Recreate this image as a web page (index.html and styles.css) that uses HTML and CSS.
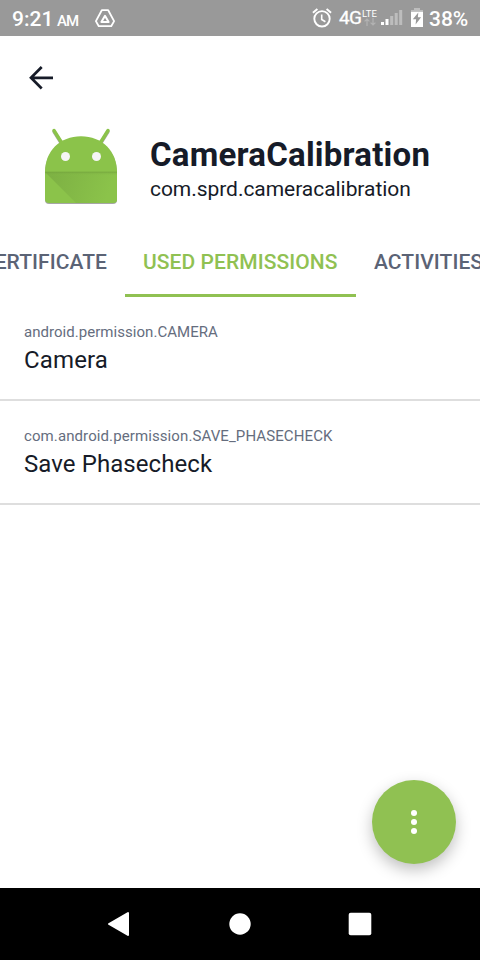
FILE: index.html
```html
<!DOCTYPE html>
<html lang="en">
<head>
<meta charset="utf-8">
<meta name="viewport" content="width=device-width">
<title>CameraCalibration</title>
<link rel="stylesheet" href="styles.css">
</head>
<body>
<div class="status">
  <span class="time">9:21</span><span class="ampm">AM</span>
  <svg class="drive" width="22" height="20" viewBox="0 0 22 20" fill="none" stroke="#fff" stroke-linejoin="round"><path stroke-width="1.8" d="M7.8 1.2h6.4l5.9 10.9-2.9 5.1H4.8l-2.9-5.1z"/><path stroke-width="2" d="M11 6.8l3.6 6.3H7.4z"/></svg>
  <div class="indicators">
    <svg class="alarm" width="20" height="20" viewBox="0 0 20 20" fill="none" stroke="#fff" stroke-width="1.9"><circle cx="10" cy="10.8" r="7.7"/><path d="M.9 4.7L5.4.9M19.1 4.7L14.6.9"/><path d="M9.7 6.5v5l3.7 2.3" stroke-width="1.6"/></svg>
    <span class="network">4G</span>
    <span class="lte"><span>LTE</span><svg width="12" height="9" viewBox="0 0 12 9" fill="none" stroke="#b2b2b2" stroke-width="1.2"><path d="M3 8V1M.6 3.4L3 1l2.4 2.4M9 0v7M6.6 4.6L9 7l2.4-2.4"/></svg></span>
    <svg class="signal" width="22" height="16" viewBox="0 0 22 16" fill="#fff"><path d="M0 12h3v3H0zM4.5 9h3v6h-3z"/><path fill="#bdbdbd" d="M9.2 6h3v9h-3zM13.7 3h3v12h-3zM18.2 0h3v15h-3z"/></svg>
    <svg class="battery" width="12" height="19" viewBox="0 0 12 19"><path fill="#bdbdbd" d="M3 0h6v2h3v4H0V2h3z"/><path fill="#fff" d="M0 3.5h12V19H0z"/><path fill="#bdbdbd" d="M0 2h12v1.8H0z"/><path fill="#999" d="M7.3 4.5L1.8 11.3h3.3L4.6 16.5l5.5-7.3H6.9z"/></svg>
    <span class="percent">38%</span>
  </div>
</div>
<header class="header">
  <svg class="back" width="26" height="26" viewBox="0 0 26 26" fill="none" stroke="#161b28" stroke-width="2.7"><path d="M25 12.8H3M13.7 2L3 12.8l10.7 10.7"/></svg>
  <div class="app">
    <svg class="robot" width="76" height="80" viewBox="0 0 76 80">
      <defs>
        <linearGradient id="fold" gradientUnits="userSpaceOnUse" x1="2" y1="45" x2="65" y2="68"><stop offset="0" stop-color="#7caf43"/><stop offset="1" stop-color="#8bc34a"/></linearGradient>
        <linearGradient id="seam" x1="0" y1="0" x2="0" y2="1"><stop offset="0" stop-color="#6f9f3b" stop-opacity=".5"/><stop offset="1" stop-color="#8bc34a" stop-opacity="0"/></linearGradient>
      </defs>
      <g class="robot-body" fill="#8bc34a">
        <path d="M11 3.5l7.5 12M65 3.5l-7.5 12" stroke="#8bc34a" stroke-width="3.4" stroke-linecap="round"/>
        <path d="M2 45C2 24 17 9.2 38 9.2S74 24 74 45v27q0 4-4 4H6q-4 0-4-4z"/>
      </g>
      <path fill="url(#fold)" d="M2 45h72v27q0 4-4 4H33z"/>
      <path fill="url(#seam)" d="M2 45h72v4H2z"/>
      <path stroke="#78aa40" stroke-width=".7" d="M2 45h72"/>
      <circle cx="22.5" cy="29.5" r="4.5" fill="#f5f5f5"/><circle cx="53.5" cy="29.5" r="4.5" fill="#f5f5f5"/>
    </svg>
    <div class="identity"><h1>CameraCalibration</h1><p>com.sprd.cameracalibration</p></div>
  </div>
</header>
<nav class="tabs"><a class="tab previous">CERTIFICATE</a><a class="tab active">USED PERMISSIONS</a><a class="tab next">ACTIVITIES</a></nav>
<main class="list">
  <section class="item"><p class="key key-camera">android.permission.CAMERA</p><p class="name name-camera">Camera</p></section>
  <section class="item"><p class="key key-save">com.android.permission.SAVE_PHASECHECK</p><p class="name name-save">Save Phasecheck</p></section>
</main>
<div class="fab"><svg width="6" height="24" viewBox="0 0 6 24" fill="#fff"><circle cx="3" cy="3" r="3"/><circle cx="3" cy="12" r="3"/><circle cx="3" cy="21" r="3"/></svg></div>
<footer class="navbar">
  <svg width="24" height="26" viewBox="0 0 24 26"><path d="M1 13L20 2v22z" fill="#fff" stroke="#fff" stroke-width="2" stroke-linejoin="round"/></svg>
  <svg width="24" height="24" viewBox="0 0 24 24"><circle cx="12" cy="12" r="10.7" fill="#fff"/></svg>
  <svg width="24" height="24" viewBox="0 0 24 24"><rect x=".7" y=".7" width="22.6" height="22.6" rx="2" fill="#fff"/></svg>
</footer>
</body>
</html>
```
FILE: styles.css
```css
* { box-sizing: border-box; }
body {
  margin: 0;
  width: 480px;
  height: 960px;
  display: flex;
  flex-direction: column;
  position: relative;
  overflow: hidden;
  background: #fff;
  color: #161b28;
  font-family: Roboto, "Liberation Sans", sans-serif;
}
h1, p { margin: 0; white-space: nowrap; }
svg { display: block; flex-shrink: 0; }
.status {
  height: 36px;
  flex-shrink: 0;
  display: flex;
  align-items: flex-start;
  padding: 0 12px;
  background: #999;
  color: #fff;
  font-weight: 500;
}
.time { width: 45px; font-size: 21px; line-height: 38px; }
.ampm { width: 37px; font-size: 15px; line-height: 42px; letter-spacing: -0.9px; }
.drive { margin-top: 9px; }
.indicators { display: flex; margin-left: auto; }
.alarm { margin: 8px 7px 0 0; }
.network { width: 23px; font-size: 19px; font-weight: 400; line-height: 36px; letter-spacing: -0.6px; -webkit-text-stroke: 0.3px #fff; }
.lte { width: 19px; padding-top: 8px; font-size: 9.5px; font-weight: 400; line-height: 11px; }
.lte svg { margin: -1px 0 0 2px; }
.signal { margin: 10px 8px 0 0; }
.battery { margin: 8px 6px 0 0; }
.percent { width: 39px; font-size: 21px; line-height: 38px; }
.header { height: 191px; flex-shrink: 0; padding: 29px 28px 0; }
.app { display: flex; margin: 36px 0 0 15px; }
.robot-body { filter: drop-shadow(0 1px 0.7px rgba(0, 0, 0, 0.35)); }
.identity { margin: 9px 0 0 31px; }
h1 { font-size: 33px; font-weight: 700; line-height: 38px; letter-spacing: 0.22px; }
.identity p { font-size: 21px; line-height: 30px; letter-spacing: -0.05px; }
.tabs { height: 70px; flex-shrink: 0; display: flex; overflow: hidden; margin-left: -35px; }
.tab {
  height: 70px;
  flex-shrink: 0;
  padding: 0 18px;
  color: #5b6375;
  font-size: 21px;
  font-weight: 500;
  line-height: 70px;
  white-space: nowrap;
  letter-spacing: 0.07px;
}
.previous { width: 160px; display: flex; justify-content: flex-end; }
.active { width: 231px; color: #90c152; border-bottom: 3px solid #90c152; }
.list { flex: 1; }
.item { height: 104px; padding: 24px 24px 0; border-bottom: 2px solid #dedede; }
.key { color: #656d7e; font-size: 15px; line-height: 22px; }
.key-camera { letter-spacing: 0.04px; }
.key-save { letter-spacing: 0.1px; }
.name { font-size: 24px; line-height: 34px; }
.name-camera { letter-spacing: 0.14px; }
.name-save { letter-spacing: 0.08px; }
.fab {
  position: absolute;
  right: 24px;
  bottom: 96px;
  width: 84px;
  height: 84px;
  display: flex;
  align-items: center;
  justify-content: center;
  border-radius: 50%;
  background: #90c152;
  box-shadow: 0 6px 15px rgba(0, 0, 0, 0.25);
}
.navbar {
  height: 72px;
  flex-shrink: 0;
  display: flex;
  align-items: center;
  justify-content: space-between;
  padding: 0 108px;
  background: #000;
}
```
